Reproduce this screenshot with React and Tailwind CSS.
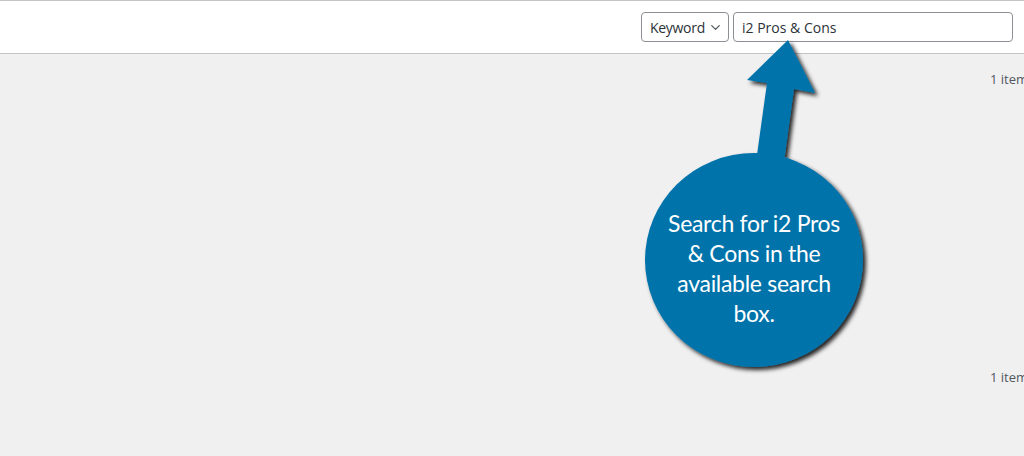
import { ChevronDown } from 'lucide-react';

export default function App() {
  return (
    <div className="relative w-[1024px] h-[456px] overflow-hidden bg-[#f0f0f1] font-['Segoe_UI','Open_Sans',sans-serif] text-[#2c3338]">
      {/* Top search bar */}
      <div className="h-[54px] bg-white border-t border-b border-[#c3c4c7] flex items-center justify-end pr-[11px] gap-[4px]">
        <div className="h-[30px] w-[88px] border border-[#8c8f94] rounded-[4px] bg-white flex items-center pl-[8px] pr-[5px] justify-between text-[14px] text-[#2c3338]">
          <span className="tracking-[-0.3px]">Keyword</span>
          <ChevronDown className="w-[15px] h-[15px] text-[#50575e] shrink-0" strokeWidth={2} />
        </div>
        <div className="h-[30px] w-[280px] border border-[#8c8f94] rounded-[4px] bg-white flex items-center px-[8px] text-[14px] text-[#2c3338]">
          i2 Pros &amp; Cons
        </div>
      </div>

      {/* List area */}
      <div className="flex flex-col">
        <div className="h-[52px] flex items-center justify-start pl-[990px] whitespace-nowrap text-[13px] text-[#50575e]">
          1 items
        </div>
        <div className="h-[246px]" />
        <div className="h-[52px] flex items-center justify-start pl-[990px] whitespace-nowrap text-[13px] text-[#50575e]">
          1 items
        </div>
      </div>

      {/* Callout: arrow + bubble */}
      <svg className="absolute left-0 top-0 pointer-events-none" width="1024" height="456" viewBox="0 0 1024 456">
        <defs>
          <filter id="shade" x="-20%" y="-20%" width="140%" height="140%">
            <feDropShadow dx="3" dy="3" stdDeviation="2" floodColor="#000" floodOpacity="0.85" />
          </filter>
        </defs>
        <g filter="url(#shade)" fill="#0073aa">
          <polygon points="788,40 815,93 794,89 784,162 756,162 767,83 747,80" />
          <ellipse cx="754" cy="260" rx="109" ry="107" />
        </g>
      </svg>
      <div className="absolute left-[645px] top-[153px] w-[218px] h-[214px] flex items-center justify-center pt-[16px]">
        <p className="font-['Lato',sans-serif] text-white text-[23px] leading-[30px] text-center tracking-[-0.3px] w-[190px]">
          Search for i2 Pros &amp; Cons in the available search box.
        </p>
      </div>
    </div>
  );
}
